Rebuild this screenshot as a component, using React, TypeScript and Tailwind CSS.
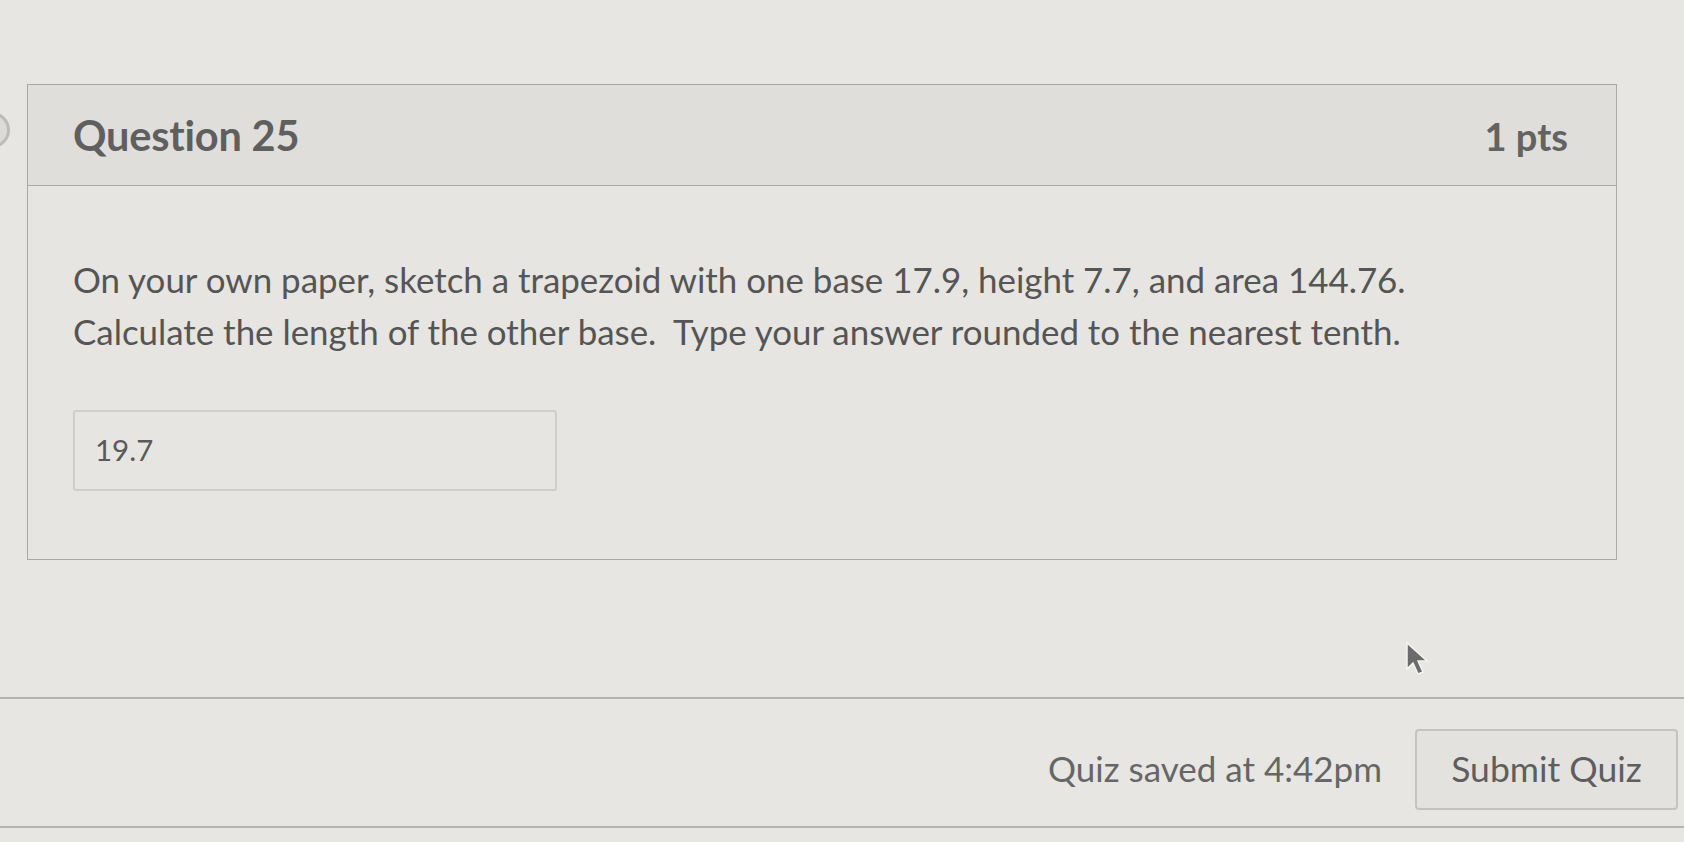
import React from "react";

export default function App() {
  return (
    <div
      className="relative w-[1684px] h-[842px] overflow-hidden bg-[#e7e6e2] text-[#5b5b5b]"
      style={{ fontFamily: "Lato, 'Open Sans', sans-serif" }}
    >
      {/* partially visible circle at left edge */}
      <div className="absolute left-[-26px] top-[112px] w-[36px] h-[36px] rounded-full border-[3px] border-[#bdbcb9] bg-[#dcdbd8]" />

      <div className="pt-[84px] pl-[27px]">
        <div className="w-[1590px] border border-[#a9a8a5]">
          <div className="h-[101px] bg-[#dfdedb] border-b border-[#a9a8a5] flex items-center justify-between pl-[45px] pr-[48px]">
            <h2 className="text-[41.5px] font-bold text-[#5f5f5f] tracking-[-0.2px]">Question 25</h2>
            <div className="text-[38px] font-bold text-[#636363] pt-[2px]">1 pts</div>
          </div>
          <div className="bg-[#e6e5e1] pl-[45px] pt-[68px] pb-[68px]">
            <p className="text-[34.9px] leading-[52px] text-[#555555]">
              On your own paper, sketch a trapezoid with one base 17.9, height 7.7, and area 144.76.
              <br />
              Calculate the length of the other base.&nbsp; Type your answer rounded to the nearest tenth.
            </p>
            <div className="mt-[52px] w-[484px] h-[81px] border-2 border-[#cfceca] rounded-[3px] bg-[#e6e5e1] flex items-center pl-[20px]">
              <span className="text-[29.5px] text-[#5a5a5a]">19.7</span>
            </div>
          </div>
        </div>
      </div>

      {/* cursor */}
      <svg className="absolute left-[1405px] top-[641px]" width="26" height="36" viewBox="0 0 26 36">
        <path d="M2 2 L2 28 L8 22 L13 33 L18 31 L13 20 L22 20 Z" fill="#6b6b6b" stroke="#f4f4f2" strokeWidth="1.5" />
      </svg>

      <div className="absolute left-0 right-0 top-[697px] h-[2px] bg-[#b5b4b0]" />
      <div className="absolute left-0 right-0 top-[697px] h-[130px] flex items-center justify-end pr-[6px] gap-[33px]">
        <span className="text-[35px] text-[#666666] pt-[12px]">Quiz saved at 4:42pm</span>
        <div className="w-[263px] h-[81px] mt-[14px] border-2 border-[#c4c3bf] rounded-[4px] bg-[#e3e2de] flex items-center justify-center">
          <span className="text-[35.5px] text-[#5e5e5e]">Submit Quiz</span>
        </div>
      </div>
      <div className="absolute left-0 right-0 top-[826px] h-[2px] bg-[#b5b4b0]" />
    </div>
  );
}
